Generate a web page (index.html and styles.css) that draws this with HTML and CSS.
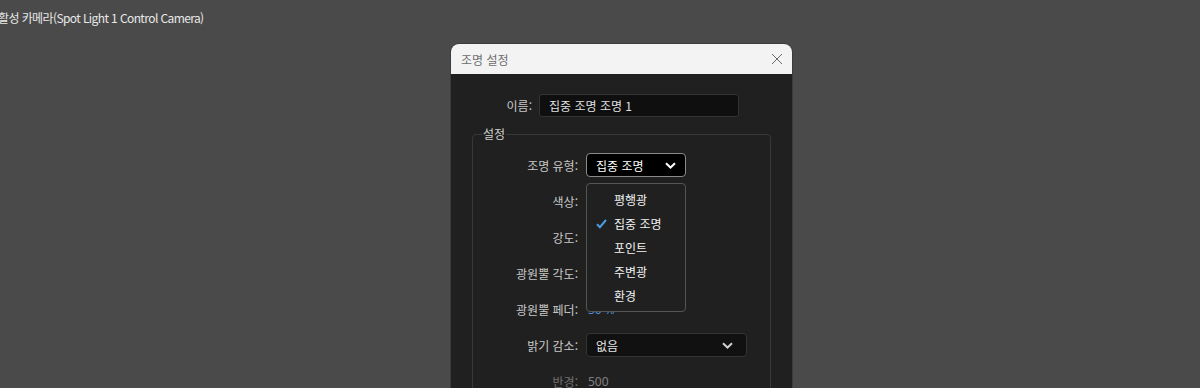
FILE: index.html
```html
<!DOCTYPE html>
<html lang="ko">
<head>
<meta charset="utf-8">
<title>조명 설정</title>
<link rel="stylesheet" href="styles.css">
</head>
<body>
<div class="caption">활성 카메라(Spot Light 1 Control Camera)</div>
<div class="dialog">
  <div class="titlebar">
    <span class="title">조명 설정</span>
    <svg class="close" width="12" height="12" viewBox="0 0 12 12"><path d="M1 1L11 11M11 1L1 11" stroke="#6a6a6a" stroke-width="1" fill="none"/></svg>
  </div>
  <div class="content">
    <div class="name-row">
      <span class="label">이름:</span>
      <div class="input">집중 조명 조명 1</div>
    </div>
    <fieldset class="group">
      <legend>설정</legend>
      <div class="rows">
        <div class="row">
          <span class="label">조명 유형:</span>
          <div class="combo combo-open">
            <span>집중 조명</span>
            <svg class="chev" width="11" height="7" viewBox="0 0 11 7"><path d="M1 1.2L5.5 5.5L10 1.2" stroke="#fff" stroke-width="2" fill="none"/></svg>
            <ul class="menu">
              <li>평행광</li>
              <li class="checked"><svg class="check" width="11" height="10" viewBox="0 0 11 10"><path d="M1 5.2L3.9 8.2L10 1" stroke="#4a9be0" stroke-width="2" fill="none"/></svg>집중 조명</li>
              <li>포인트</li>
              <li>주변광</li>
              <li>환경</li>
            </ul>
          </div>
        </div>
        <div class="row"><span class="label">색상:</span><div class="value"></div></div>
        <div class="row"><span class="label">강도:</span><div class="value"></div></div>
        <div class="row"><span class="label">광원뿔 각도:</span><div class="value"></div></div>
        <div class="row"><span class="label">광원뿔 페더:</span><div class="value blue">30 %</div></div>
        <div class="row">
          <span class="label">밝기 감소:</span>
          <div class="combo combo-wide">
            <span>없음</span>
            <svg class="chev" width="11" height="7" viewBox="0 0 11 7"><path d="M1 1.2L5.5 5.5L10 1.2" stroke="#d0d0d0" stroke-width="2" fill="none"/></svg>
          </div>
        </div>
        <div class="row disabled"><span class="label">반경:</span><div class="value">500</div></div>
      </div>
    </fieldset>
  </div>
</div>
</body>
</html>
```

FILE: styles.css
```css
html, body {
  margin: 0;
  padding: 0;
}
body {
  background: #4a4a4a;
  font-family: "Noto Sans CJK KR", sans-serif;
  font-size: 12px;
  color: #e6e6e6;
  height: 388px;
  overflow: hidden;
}
.caption {
  padding-top: 10px;
  margin-left: -2px;
  line-height: 16px;
  height: 16px;
  color: #e8e8e8;
  letter-spacing: -0.6px;
  font-family: "Noto Sans CJK KR", sans-serif;
}
.dialog {
  margin-top: 18px;
  margin-left: 451px;
  width: 341px;
  border-radius: 8px 8px 0 0;
  overflow: hidden;
  background: #202020;
  box-shadow: 0 0 0 1px #3c3c3c;
}
.titlebar {
  height: 30px;
  background: #f3f3f3;
  display: flex;
  align-items: center;
  justify-content: space-between;
  padding: 0 10px 0 10px;
}
.title {
  color: #6e6e6e;
  font-size: 12px;
}
.close {
  display: block;
  margin-right: -1px;
}
.content {
  padding: 20px 21px 0 21px;
}
.label {
  color: #c8c8c8;
  text-align: right;
  white-space: nowrap;
}
.name-row {
  display: grid;
  grid-template-columns: 60px 200px;
  column-gap: 7px;
  align-items: center;
}
.input {
  height: 21px;
  line-height: 21px;
  background: #0f0f0f;
  border: 1px solid #333;
  border-radius: 3px;
  padding: 0 9px;
  color: #e0e0e0;
}
.group {
  margin: 9px 0 0 0;
  padding: 11px 0 20px 0;
  border: 1px solid #383838;
  border-radius: 4px;
}
.group legend {
  padding: 0 1px;
  margin-left: 9px;
  color: #cfcfcf;
  line-height: 16px;
}
.rows {
  display: flex;
  flex-direction: column;
  gap: 12px;
}
.row {
  display: grid;
  grid-template-columns: 105px auto;
  column-gap: 8px;
  align-items: center;
  height: 24px;
}
.value {
  color: #d0d0d0;
  padding-left: 2px;
  font-family: "Noto Sans", sans-serif;
}
.blue {
  color: #4a8fd8;
}
.disabled .label {
  color: #707070;
}
.disabled .value {
  color: #808080;
}
.combo {
  position: relative;
  height: 22px;
  box-sizing: content-box;
  border-radius: 4px;
  display: flex;
  align-items: center;
  justify-content: space-between;
}
.combo-open {
  width: 80px;
  padding: 0 9px;
  background: #000;
  border: 1px solid #8a8a8a;
  color: #fff;
}
.combo-wide {
  width: 137px;
  padding: 0 13px 0 9px;
  background: #111;
  border: 1px solid #333;
  color: #e6e6e6;
}
.chev {
  display: block;
}
.menu {
  position: absolute;
  left: -1px;
  top: 29px;
  width: 98px;
  margin: 0;
  padding: 4px 0 3px 0;
  list-style: none;
  background: #202020;
  border: 1px solid #555;
  border-radius: 4px;
  z-index: 5;
}
.menu li {
  height: 24px;
  line-height: 24px;
  padding-left: 27px;
  color: #f2f2f2;
  position: relative;
}
.check {
  position: absolute;
  left: 9px;
  top: 7px;
}
```
